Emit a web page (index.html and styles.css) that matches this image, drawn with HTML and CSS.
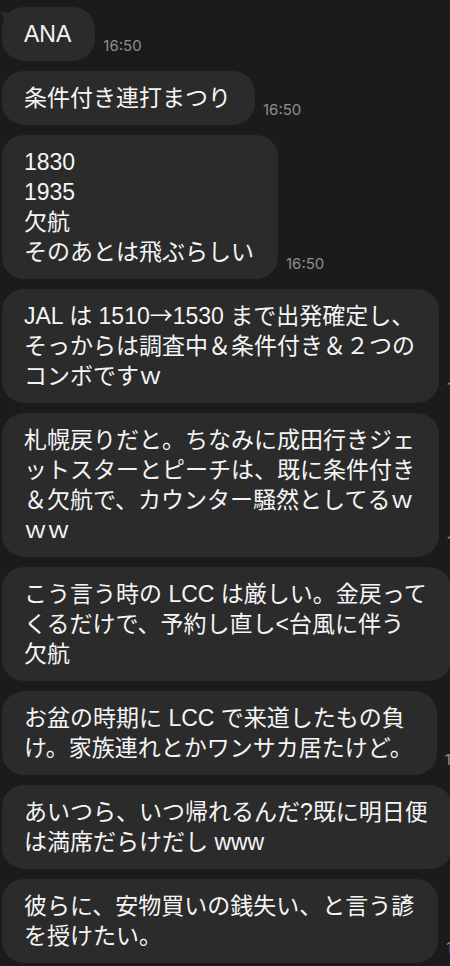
FILE: index.html
```html
<!DOCTYPE html>
<html lang="ja">
<head>
<meta charset="utf-8">
<title>Chat</title>
<link rel="stylesheet" href="styles.css">
</head>
<body>
<main class="chat">
  <div class="row">
    <div class="bubble first">ANA</div>
    <span class="time">16:50</span>
  </div>
  <div class="row">
    <div class="bubble">条件付き連打まつり</div>
    <span class="time">16:50</span>
  </div>
  <div class="row">
    <div class="bubble">1830<br>1935<br>欠航<br>そのあとは飛ぶらしい</div>
    <span class="time">16:50</span>
  </div>
  <div class="row">
    <div class="bubble">JAL は 1510<span class="cjk">→</span>1530 まで出発確定し、<br>そっからは調査中＆条件付き＆２つの<br>コンボですｗ</div>
    <span class="time">16:50</span>
  </div>
  <div class="row">
    <div class="bubble">札幌戻りだと。ちなみに成田行きジェ<br>ットスターとピーチは、既に条件付き<br>＆欠航で、カウンター騒然としてるｗ<br>ｗｗ</div>
    <span class="time">16:50</span>
  </div>
  <div class="row">
    <div class="bubble">こう言う時の LCC は厳しい。金戻って<br>くるだけで、予約し直し&lt;台風に伴う<br>欠航</div>
    <span class="time">16:50</span>
  </div>
  <div class="row">
    <div class="bubble">お盆の時期に LCC で来道したもの負<br>け。家族連れとかワンサカ居たけど。</div>
    <span class="time">16:50</span>
  </div>
  <div class="row">
    <div class="bubble">あいつら、いつ帰れるんだ?既に明日便<br>は満席だらけだし www</div>
    <span class="time">16:50</span>
  </div>
  <div class="row">
    <div class="bubble">彼らに、安物買いの銭失い、と言う諺<br>を授けたい。</div>
    <span class="time">16:50</span>
  </div>
</main>
</body>
</html>
```

FILE: styles.css
```css
html, body {
  margin: 0;
  padding: 0;
  background: #1b1b1b;
  overflow: hidden;
  font-family: "Liberation Sans", "Noto Sans CJK JP", sans-serif;
}

.chat {
  display: flex;
  flex-direction: column;
  gap: 10px;
  padding: 7px 0 0 2px;
}

.row {
  display: flex;
  align-items: flex-end;
  gap: 8px;
}

.bubble {
  position: relative;
  flex: none;
  background: #2b2b2b;
  color: #f5f5f5;
  font-family: "Liberation Sans", "Noto Sans CJK JP", sans-serif;
  font-size: 23px;
  line-height: 30px;
  letter-spacing: 0;
  padding: 12px 24px 12px 22px;
  border-radius: 22px;
  white-space: nowrap;
}

.cjk {
  font-family: "Noto Sans CJK JP", sans-serif;
  line-height: 1;
}

.bubble.first::before {
  content: "";
  position: absolute;
  left: -2px;
  top: 4px;
  width: 12px;
  height: 12px;
  background: #2b2b2b;
  clip-path: polygon(0 0, 100% 30%, 60% 100%);
}

.time {
  flex: none;
  color: #8e8e8e;
  font-family: Inter, "Liberation Sans", sans-serif;
  font-size: 15px;
  line-height: 18px;
  padding-bottom: 6px;
  white-space: nowrap;
}
```
